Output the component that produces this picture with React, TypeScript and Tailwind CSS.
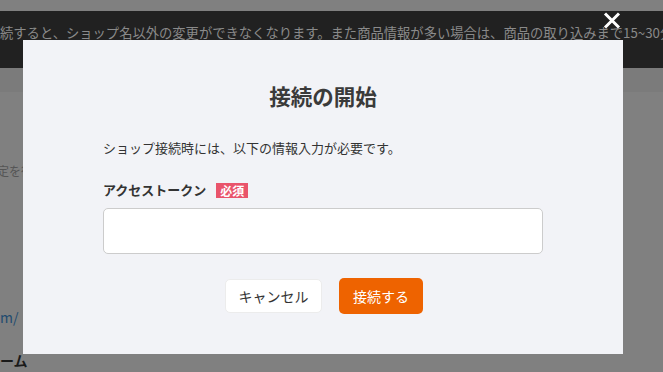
import React from "react";

const jp = { fontFamily: '"Noto Sans CJK JP", "Noto Sans", sans-serif' };

const App: React.FC = () => {
  return (
    <div className="relative w-[663px] h-[372px] overflow-hidden bg-[#808080]" style={jp}>
      {/* page underneath (dimmed by the overlay) */}
      <div className="pt-[11px]">
        <div className="h-[57px] bg-[#212121] pt-[12px] whitespace-nowrap overflow-hidden text-[13.3px] leading-[20px] text-[#8a8a8a]">
          続すると、ショップ名以外の変更ができなくなります。また商品情報が多い場合は、商品の取り込みまで15~30分
        </div>
        <div className="h-[24px] bg-[#7b7b7b]"></div>
        <div className="pt-[70px] -ml-[3px] text-[12px] leading-[18px] text-[#555] whitespace-nowrap">定を行</div>
        <div className="pt-[128px] text-[14px] leading-[18px] text-[#1f4b6f]">m/</div>
        <div className="pt-[25px] text-[14px] leading-[18px] font-bold text-[#1a1a1a]">ーム</div>
      </div>

      {/* close button */}
      <button className="absolute left-[603px] top-[12px] w-[18px] h-[17px] flex items-center justify-center">
        <svg width="18" height="17" viewBox="0 0 18 17">
          <path d="M2 1.5 L16 15.5 M16 1.5 L2 15.5" stroke="#fff" strokeWidth="3" strokeLinecap="butt" />
        </svg>
      </button>

      {/* modal */}
      <div className="absolute left-[23px] top-[40px] w-[600px] h-[314px] bg-[#f2f3f7] px-[80px] pt-[41px]">
        <h2 className="text-center text-[21.5px] leading-[30px] font-bold text-[#3a3a3a]">接続の開始</h2>
        <p className="mt-[27px] text-[13px] leading-[20px] text-[#333]">
          ショップ接続時には、以下の情報入力が必要です。
        </p>
        <div className="mt-[22px] flex items-center gap-[10px]">
          <span className="text-[13px] leading-[20px] font-bold text-[#333]">アクセストークン</span>
          <span className="bg-[#e9546b] text-white text-[12px] leading-[15px] font-bold px-[4px]">必須</span>
        </div>
        <input
          type="text"
          className="mt-[8px] block w-[440px] h-[46px] bg-white border border-[#cccccc] rounded-[5px] outline-none"
        />
        <div className="mt-[24px] flex justify-center gap-[17px] pl-[2px]">
          <button className="w-[97px] h-[34px] mt-[1px] bg-white rounded-[5px] border border-[#ececec] text-[14px] text-[#333]">
            キャンセル
          </button>
          <button className="w-[84px] h-[36px] bg-[#ee6300] rounded-[5px] text-[14px] text-white">
            接続する
          </button>
        </div>
      </div>
    </div>
  );
};

export default App;
